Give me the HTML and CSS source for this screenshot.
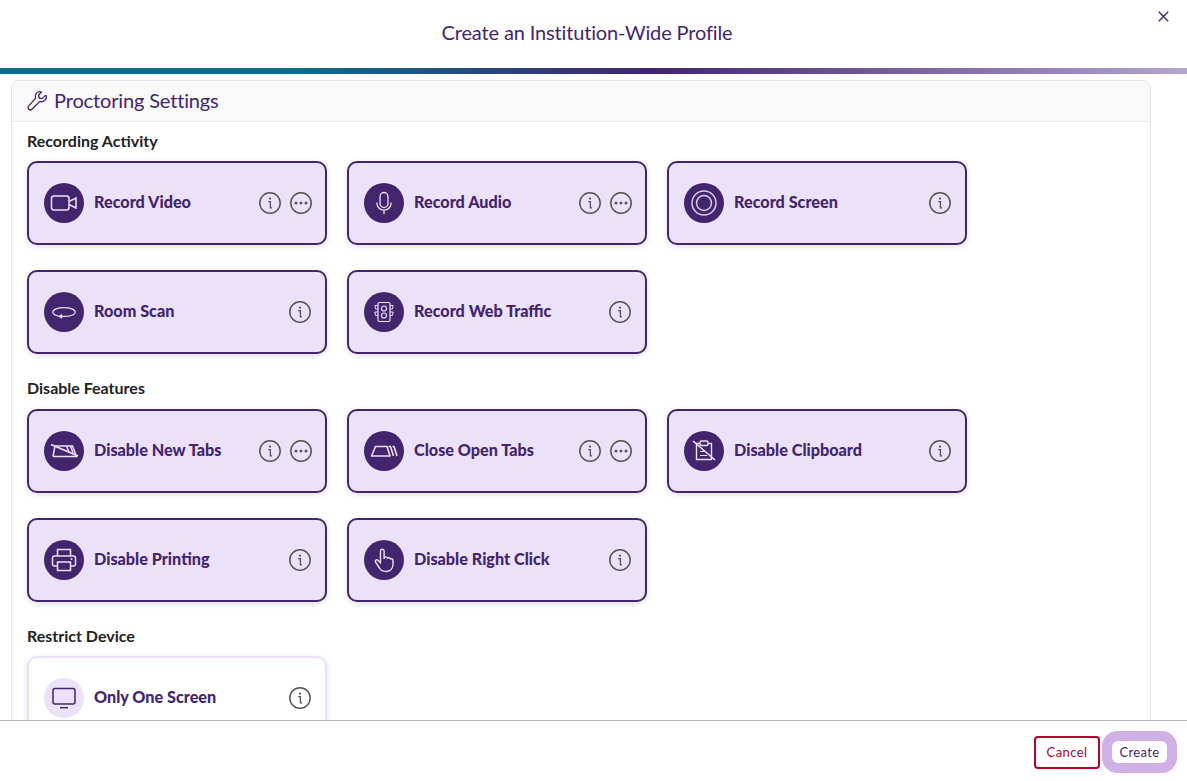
FILE: index.html
```html
<!DOCTYPE html>
<html lang="en">
<head>
<meta charset="utf-8">
<title>Create an Institution-Wide Profile</title>
<link rel="stylesheet" href="styles.css">
</head>
<body>
<svg class="defs" width="0" height="0" aria-hidden="true">
  <symbol id="info" viewBox="0 0 22 22"><circle cx="11" cy="11" r="10.2" fill="none" stroke="#555" stroke-width="1.5"/><circle cx="11" cy="6.600" r="1.100" fill="#555"/><path d="M9.200 9.600h2.200v6.200h1.600" fill="none" stroke="#555" stroke-width="1.300"/></symbol>
  <symbol id="more" viewBox="0 0 22 22"><circle cx="11" cy="11" r="10.2" fill="none" stroke="#555" stroke-width="1.5"/><circle cx="6" cy="11" r="1.500" fill="#555"/><circle cx="11" cy="11" r="1.500" fill="#555"/><circle cx="16" cy="11" r="1.500" fill="#555"/></symbol>
</svg>
<div class="modal">
  <header class="top">
    <h1 class="title">Create an Institution-Wide Profile</h1>
    <button class="close" aria-label="Close"><svg width="11" height="11" viewBox="0 0 11 11"><path d="M.8.8l9.4 9.4M10.2.8L.8 10.2" stroke="#43256e" stroke-width="1.4" fill="none"/></svg></button>
  </header>
  <div class="rainbow"></div>
  <main class="body">
    <section class="panel">
      <div class="panel-head">
        <svg class="wrench" width="20" height="20" viewBox="0 0 20 20"><path d="M18.200 4.600l-3 3-3-.6-.6-3 3-3c-2.400-.8-5 .2-5.900 2.500-.5 1.300-.4 2.500 0 3.600L1.800 14.900c-1 1-1 2.400 0 3.300.9.900 2.300.9 3.200 0l7.900-7.800c1.100.4 2.300.5 3.500 0 2.300-.9 3.300-3.400 2.800-5.800z" fill="none" stroke="#43256e" stroke-width="1.300" stroke-linejoin="round"/></svg>
        <h2 class="panel-title">Proctoring Settings</h2>
      </div>
      <div class="panel-body">
        <h3 class="group">Recording Activity</h3>
        <div class="cards">
          <div class="card">
            <span class="disc"><svg width="28" height="28" viewBox="0 0 28 28"><rect x="1.500" y="7" width="17.500" height="14" rx="2.500" fill="none" stroke="#ebe1f9" stroke-width="1.500"/><path d="M19 12.500l7-3.500v10l-7-3.500" fill="none" stroke="#ebe1f9" stroke-width="1.500"/></svg></span>
            <span class="label">Record Video</span>
            <span class="actions"><svg class="act"><use href="#info"/></svg><svg class="act"><use href="#more"/></svg></span>
          </div>
          <div class="card">
            <span class="disc"><svg width="28" height="28" viewBox="0 0 28 28"><rect x="10" y="3.500" width="8" height="15" rx="4" fill="none" stroke="#ebe1f9" stroke-width="1.300"/><path d="M6.800 13.500c0 4.300 3 7.700 7.200 7.700s7.200-3.400 7.200-7.700M14 21.200v4" fill="none" stroke="#ebe1f9" stroke-width="1.300"/></svg></span>
            <span class="label">Record Audio</span>
            <span class="actions"><svg class="act"><use href="#info"/></svg><svg class="act"><use href="#more"/></svg></span>
          </div>
          <div class="card">
            <span class="disc"><svg width="32" height="32" viewBox="0 0 32 32"><circle cx="16" cy="16" r="12" fill="none" stroke="#d9cdea" stroke-width="1.500"/><circle cx="16" cy="16" r="7.500" fill="none" stroke="#d9cdea" stroke-width="1.500"/></svg></span>
            <span class="label">Record Screen</span>
            <span class="actions"><svg class="act"><use href="#info"/></svg></span>
          </div>
          <div class="card">
            <span class="disc"><svg width="24" height="24" viewBox="0 0 24 24"><path d="M8.500 16.300C4.200 15.800 .8 14.200 .8 12c0-2.400 5-4.400 11.200-4.400S23.200 9.600 23.200 12c0 2.200-3.600 3.900-8.600 4.300" fill="none" stroke="#ebe1f9" stroke-width="1.200"/><path d="M14.600 16.400H7.500M10 14.500l-2.500 1.900 2.500 1.900" fill="none" stroke="#ebe1f9" stroke-width="1.200"/></svg></span>
            <span class="label">Room Scan</span>
            <span class="actions"><svg class="act"><use href="#info"/></svg></span>
          </div>
          <div class="card">
            <span class="disc"><svg width="24" height="24" viewBox="0 0 24 24"><rect x="6" y="2.500" width="12" height="19" rx="1.500" fill="none" stroke="#ebe1f9" stroke-width="1.200"/><circle cx="12" cy="8.500" r="2.500" fill="none" stroke="#ebe1f9" stroke-width="1.200"/><circle cx="12" cy="15.500" r="2.500" fill="none" stroke="#ebe1f9" stroke-width="1.200"/><path d="M6 5.500H2.800l.8 3.500H6M6 12H2.800l.8 3.500H6M18 5.500h3.200l-.8 3.500H18M18 12h3.200l-.8 3.500H18" fill="none" stroke="#ebe1f9" stroke-width="1"/></svg></span>
            <span class="label">Record Web Traffic</span>
            <span class="actions"><svg class="act"><use href="#info"/></svg></span>
          </div>
        </div>

        <h3 class="group group-next">Disable Features</h3>
        <div class="cards">
          <div class="card">
            <span class="disc"><svg width="32" height="32" viewBox="0 0 32 32"><path d="M7 11h17.500l4 10.500H5" fill="none" stroke="#ebe1f9" stroke-width="1.500"/><path d="M5 21.500L7 11" fill="none" stroke="#ebe1f9" stroke-width="1.500"/><path d="M3 9.500l27 11.500" stroke="#ebe1f9" stroke-width="1.900" fill="none"/><path d="M18.500 11l2.500 6M22.500 11l2.500 7" stroke="#ebe1f9" stroke-width="1.500" fill="none"/></svg></span>
            <span class="label">Disable New Tabs</span>
            <span class="actions"><svg class="act"><use href="#info"/></svg><svg class="act"><use href="#more"/></svg></span>
          </div>
          <div class="card">
            <span class="disc"><svg width="32" height="32" viewBox="0 0 32 32"><path d="M3.500 21L7.500 11.500h11.500l3 9.500z" fill="none" stroke="#ebe1f9" stroke-width="1.600" stroke-linejoin="round"/><path d="M20.500 11.500h2l3 9.500M24.500 11.500h1.500l3 9.500" fill="none" stroke="#ebe1f9" stroke-width="1.600"/></svg></span>
            <span class="label">Close Open Tabs</span>
            <span class="actions"><svg class="act"><use href="#info"/></svg><svg class="act"><use href="#more"/></svg></span>
          </div>
          <div class="card">
            <span class="disc"><svg width="30" height="30" viewBox="0 0 30 30"><path d="M11 7.500H7.500v16h15v-16H19" fill="none" stroke="#ebe1f9" stroke-width="1.400"/><rect x="11" y="5" width="8" height="4.500" rx="1.500" fill="none" stroke="#ebe1f9" stroke-width="1.400"/><path d="M4 5l22 19" stroke="#ebe1f9" stroke-width="1.600" fill="none"/><path d="M11 15.500h6M11 19.500h7" stroke="#ebe1f9" stroke-width="1.200" fill="none"/></svg></span>
            <span class="label">Disable Clipboard</span>
            <span class="actions"><svg class="act"><use href="#info"/></svg></span>
          </div>
          <div class="card">
            <span class="disc"><svg width="28" height="28" viewBox="0 0 28 28"><path d="M7.500 10V3.500h13V10" fill="none" stroke="#ebe1f9" stroke-width="1.500"/><path d="M7.500 20H4.500a2 2 0 0 1-2-2v-6a2 2 0 0 1 2-2h19a2 2 0 0 1 2 2v6a2 2 0 0 1-2 2h-3" fill="none" stroke="#ebe1f9" stroke-width="1.500"/><rect x="7.500" y="16" width="13" height="8.500" fill="none" stroke="#ebe1f9" stroke-width="1.500"/><circle cx="21.500" cy="13" r="1" fill="#ebe1f9"/></svg></span>
            <span class="label">Disable Printing</span>
            <span class="actions"><svg class="act"><use href="#info"/></svg></span>
          </div>
          <div class="card">
            <span class="disc"><svg width="28" height="28" viewBox="0 0 28 28"><path d="M10.500 16V5a1.800 1.800 0 0 1 3.600 0v7.500M14.100 11.500c1-1 3-.8 3.300.7.900-.9 2.900-.7 3.100.8 1-.6 2.500 0 2.500 1.500v3.500c0 4.500-2.800 7.500-7 7.500-3.300 0-5.200-1.300-6.500-3.500l-4-6c-.9-1.600 1.100-3 2.500-1.700l2.500 2.700" fill="none" stroke="#ebe1f9" stroke-width="1.400" stroke-linecap="round" stroke-linejoin="round"/></svg></span>
            <span class="label">Disable Right Click</span>
            <span class="actions"><svg class="act"><use href="#info"/></svg></span>
          </div>
        </div>

        <h3 class="group group-next group-last">Restrict Device</h3>
        <div class="cards">
          <div class="card card-off">
            <span class="disc"><svg width="26" height="26" viewBox="0 0 26 26"><rect x="2" y="3.500" width="22" height="15.500" rx="2" fill="none" stroke="#43256e" stroke-width="1.500"/><path d="M9 22.700h8" stroke="#43256e" stroke-width="1.500" fill="none"/></svg></span>
            <span class="label">Only One Screen</span>
            <span class="actions"><svg class="act"><use href="#info"/></svg></span>
          </div>
        </div>
      </div>
    </section>
  </main>
  <footer class="foot">
    <button class="btn btn-cancel">Cancel</button>
    <button class="btn btn-create">Create</button>
  </footer>
</div>
</body>
</html>
```
FILE: styles.css
```css
* { box-sizing: border-box; }
html, body { margin: 0; height: 100%; overflow: hidden; background: #fff; }
body { font-family: "Lato", "Noto Sans", sans-serif; color: #222; }
.defs { position: absolute; }
.modal { height: 781px; display: flex; flex-direction: column; }
.top { height: 68px; flex: none; display: flex; align-items: center; justify-content: center; padding-right: 13px; position: relative; }
.title { margin: 0 0 4px; font-size: 20px; font-weight: 400; color: #43256e; letter-spacing: -0.15px; }
.close { position: absolute; top: 11px; right: 18px; padding: 0; border: 0; background: none; width: 11px; height: 11px; display: block; line-height: 0; }
.rainbow { height: 6px; flex: none; background: linear-gradient(90deg, #0b6e87 0%, #0b6e87 25%, #43256e 55%, #b5a5cc 100%); }
.body { flex: 1; min-height: 0; overflow: hidden; padding: 6px 36px 0 11px; }
.panel { border: 1px solid #e5e5e5; border-radius: 8px 8px 0 0; height: 800px; }
.panel-head { height: 41px; background: #f9f9f9; border-bottom: 1px solid #ececec; border-radius: 8px 8px 0 0; display: flex; align-items: center; gap: 7px; padding-left: 15px; }
.wrench { flex: none; }
.panel-title { margin: 0 0 2px; font-size: 20px; font-weight: 400; color: #43256e; letter-spacing: -0.15px; }
.panel-body { padding: 9px 15px; }
.group { margin: 0 0 11px; font-size: 16px; line-height: 19px; font-weight: 700; color: #222; }
.group-next { margin-top: 24px; margin-bottom: 12px; }
.group-last { margin-bottom: 11px; }
.cards { display: grid; grid-template-columns: repeat(3, 300px); gap: 25px 20px; }
.card { height: 84px; background: #ebe1f9; border: 2px solid #43256e; border-radius: 10px; box-shadow: 0 2px 6px rgba(60, 40, 100, .14); display: flex; align-items: center; gap: 10px; padding: 0 13px 0 15px; }
.card-off { background: #fff; border-color: #ebe1f9; }
.disc { width: 40px; height: 40px; flex: none; border-radius: 50%; background: #43256e; display: flex; align-items: center; justify-content: center; }
.card-off .disc { background: #ebe1f9; }
.label { flex: 1; font-size: 16.2px; line-height: 20px; font-weight: 900; color: #43256e; white-space: nowrap; margin-bottom: 2px; }
.actions { display: flex; gap: 9px; flex: none; }
.act { width: 22px; height: 22px; display: block; }
.act:only-child { margin-right: 1px; }
.foot { height: 61px; flex: none; background: #fff; border-top: 1px solid #b5b5b5; display: flex; align-items: center; justify-content: flex-end; gap: 12px; padding: 2px 20px 0 0; position: relative; }
.btn { font-family: inherit; font-size: 13px; background: #fff; padding: 0; letter-spacing: .4px; }
.btn-cancel { width: 66px; height: 33px; border: 2px solid #b8002f; border-radius: 4px; color: #b8002f; }
.btn-create { width: 55px; height: 22px; border: 0; border-radius: 6px; color: #43256e; box-shadow: 0 0 0 10px #d0b1e5; }
```
